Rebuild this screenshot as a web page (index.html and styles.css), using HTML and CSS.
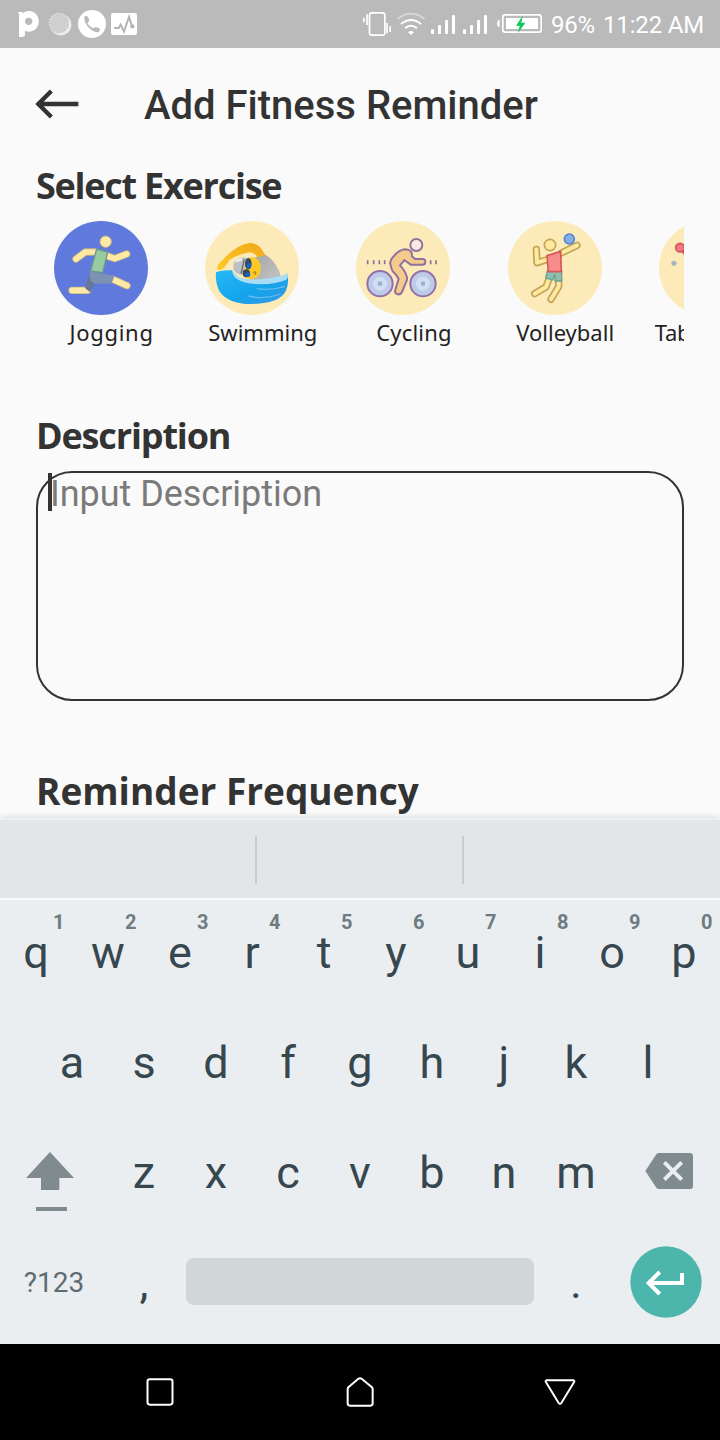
FILE: index.html
```html
<!DOCTYPE html>
<html lang="en">
<head>
<meta charset="utf-8">
<title>Add Fitness Reminder</title>
<link rel="stylesheet" href="styles.css">
</head>
<body>
<div class="phone">
  <div class="status">
    <svg width="42" height="48" viewBox="0 0 126 144"><path d="M54 36h12l3 3q8-6 18-6a29 31 0 1 1-12 59v11q0 8-9 8H57V43z" fill="#fff"/><circle cx="86" cy="64" r="11" fill="#bababa"/></svg>
    <svg width="34" height="48" viewBox="126 0 102 144"><circle cx="182" cy="74" r="32" fill="#eee"/><circle cx="177" cy="69" r="31" fill="#c9c9c9"/><circle cx="177" cy="69" r="27" fill="none" stroke="#e2e2e2" stroke-width="8" stroke-dasharray="3 5.5"/><circle cx="177" cy="69" r="22" fill="#d0d0d0"/></svg>
    <svg width="33" height="48" viewBox="228 0 99 144"><circle cx="276" cy="72" r="42" fill="#fff"/><path d="M254 49q5-3 10 1l4 12-6 8q7 11 17 15l8-4 12 4q3 7-2 11-15 4-32-14-15-17-11-33z" fill="#bababa"/></svg>
    <svg width="31" height="48" viewBox="327 0 93 144"><rect x="333" y="39" width="78" height="66" rx="7" fill="#fff"/><path d="M342 84h14l6-10 10 21 15-44 9 28" fill="none" stroke="#b4b4b4" stroke-width="6"/><circle cx="397" cy="79" r="6.500" fill="#b4b4b4"/></svg>
    <span class="spacer"></span>
    <svg width="34" height="48" viewBox="33 0 102 144" fill="none" stroke="#fff" stroke-width="5"><rect x="58.500" y="38.500" width="46" height="67" rx="7"/><path d="M41.500 53v14M51 43v32M111 69v31M120.500 78v18"/></svg>
    <svg width="32" height="48" viewBox="135 0 96 144" fill="none" stroke="#fff" stroke-width="6"><path d="M142 57Q183 26 224 57" stroke="#d6d6d6"/><path d="M153 72Q183 48 213 72M165 85Q183 70 201 85"/><path d="M174 97Q183 88 192 97L183 105z" fill="#fff" stroke="none"/></svg>
    <svg width="32" height="48" viewBox="231 0 96 144" fill="#fff"><rect x="243" y="88" width="9" height="14" rx="2"/><rect x="264" y="75" width="9" height="27" rx="2"/><rect x="285" y="60" width="9" height="42" rx="2"/><rect x="306" y="45" width="9" height="57" rx="2"/></svg>
    <svg width="32" height="48" viewBox="231 0 96 144" fill="#fff"><rect x="243" y="88" width="9" height="14" rx="2"/><rect x="264" y="75" width="9" height="27" rx="2"/><rect x="285" y="60" width="9" height="42" rx="2"/><rect x="306" y="45" width="9" height="57" rx="2"/></svg>
    <svg width="57" height="48" viewBox="423 0 171 144"><path d="M449 59v23q-8-2-8-11.500T449 59z" fill="#fff"/><rect x="458.500" y="44.500" width="115" height="52" rx="7" fill="none" stroke="#fff" stroke-width="5"/><rect x="468" y="54" width="96" height="33" fill="#fff"/><path d="M518 47L498 77h11l-5 22 22-31h-12z" fill="#0cc95c"/></svg>
    <span class="battery">96%</span><span class="clock">11:22 AM</span>
  </div>

  <main class="content">
    <header class="topbar">
      <svg class="back" width="44" height="30" viewBox="105 268 132 90" fill="none" stroke="#333" stroke-width="13"><path d="M235 313H116M154 274L115 313l39 39"/></svg>
      <h1>Add Fitness Reminder</h1>
    </header>

    <h2 class="h-exercise">Select Exercise</h2>
    <ul class="exercises">
      <li>
        <svg class="disc active" viewBox="41 33 282 282">
          <g fill="none" stroke-linecap="round" stroke-linejoin="round">
            <path d="M166 126h-31l-28 21M201 138l22 8 36-14M218 208l42 19M95 241h47" stroke="#c5b583" stroke-width="22"/>
            <path d="M166 126h-31l-28 21M201 138l22 8 36-14M218 208l42 19M95 241h47" stroke="#ffe9a4" stroke-width="17"/>
          </g>
          <path d="M147 188l-13 46 15 13 17-31 12-14z" fill="#66779a"/>
          <path d="M150 183l72 15-8 23h-49q-18-5-18-25z" fill="#7b92b4"/>
          <path d="M169 117l33 9-15 62-36-5z" fill="#99cba0" stroke="#67988e" stroke-width="4"/>
          <circle cx="196" cy="95" r="17" fill="#ffe9a4" stroke="#c5b583" stroke-width="3"/>
        </svg>
        <span class="jogging">Jogging</span>
      </li>
      <li>
        <svg class="disc" viewBox="45 33 282 282">
          <defs>
            <linearGradient id="water" x1="0" y1="0" x2="1" y2="1"><stop offset="0" stop-color="#29b9f5"/><stop offset=".55" stop-color="#13a4eb"/><stop offset="1" stop-color="#3497e2"/></linearGradient>
            <linearGradient id="arm" x1="0" y1="1" x2="1" y2="0"><stop offset="0" stop-color="#ffc927"/><stop offset="1" stop-color="#f0a818"/></linearGradient>
            <linearGradient id="suit" x1="0" y1="0" x2="1" y2="1"><stop offset="0" stop-color="#a3a3a3"/><stop offset="1" stop-color="#c6c6c6"/></linearGradient>
          </defs>
          <path d="M193 143l29-12q43 26 52 74l-40 14-59-9q31-25 18-67z" fill="url(#suit)"/>
          <path d="M83 178q-5-12 13-26 43-48 83-53 31-1 46 37l-22 6q-12-19-32-14-28 6-53 22-14 28-30 31z" fill="url(#arm)"/>
          <path d="M78 187q18-8 49-6 4 31 50 35 60 4 116-20 4 28-6 48-20 38-106 38-64 0-92-37-14-26-11-58z" fill="url(#water)"/>
          <path d="M127 181q12 24 51 27 50 2 91-9 15-2 24-11 4 14-5 22-36 15-92 12-69-4-69-41z" fill="#a9dcf5"/>
          <path d="M200 236q46 6 85-7M176 258q48 12 96-6" fill="none" stroke="#62bdf1" stroke-width="4"/>
          <path d="M172 144q33-9 40 24 3 37-30 39-18 0-27-16z" fill="#ffc925"/>
          <path d="M130 175q-4-27 25-32 13-1 20 3l-19 49q-22-2-26-20z" fill="#bcc1c5"/>
          <path d="M138 155q8-7 18-7" stroke="#ececec" stroke-width="8" fill="none"/>
          <path d="M163 148l-10 43" stroke="#6a6c6c" stroke-width="4"/>
          <ellipse cx="175" cy="161" rx="10" ry="17" fill="#34495b"/><ellipse cx="169" cy="190" rx="11" ry="12" fill="#34495b"/>
          <ellipse cx="177" cy="167" rx="7" ry="8" fill="#1763c5"/><ellipse cx="173" cy="194" rx="8" ry="7" fill="#1763c5"/>
          <path d="M190 188q8-6 8 2l-5 4" fill="none" stroke="#8c6519" stroke-width="3"/>
        </svg>
        <span class="swimming">Swimming</span>
      </li>
      <li>
        <svg class="disc" viewBox="48 33 282 282">
          <path d="M83 151v12M101 151v12M118 151v12M134 151v12M255 151v12M272 151v12M288 151v12" stroke="#8e6a9d" stroke-width="5"/>
          <g stroke="#9270a8" stroke-width="6"><circle cx="120" cy="221" r="38" fill="#bdcbe9"/><circle cx="249" cy="221" r="38" fill="#bdcbe9"/></g>
          <g fill="#d1def4"><circle cx="120" cy="221" r="21"/><circle cx="249" cy="221" r="21"/></g>
          <g fill="#9fafcf"><circle cx="120" cy="221" r="7"/><circle cx="249" cy="221" r="7"/></g>
          <path d="M152 166q-5-13 7-25 19-23 37-23 14 1 19 10l1 11 9 8h25q7 2 6 9-1 8-8 8h-36l-19-14-13 16q15 16 19 30 5 10-1 21l-12 29q-5 10-15 6-8-3-5-13l10-32-10-15q-11-8-14-26z" fill="#f5cb8c" stroke="#9270a0" stroke-width="6"/>
          <circle cx="229" cy="105" r="18" fill="#f9eadf" stroke="#9270a0" stroke-width="6"/>
        </svg>
        <span class="cycling">Cycling</span>
      </li>
      <li>
        <svg class="disc" viewBox="54 33 282 282">
          <g fill="none" stroke-linecap="round" stroke-linejoin="round">
            <path d="M171 149l-30 9-2-40M214 129l47-23M176 209l-8 22-34 20M206 210v20l-23 38" stroke="#c2a457" stroke-width="22"/>
            <path d="M171 149l-30 9-2-40M214 129l47-23M176 209l-8 22-34 20M206 210v20l-23 38" stroke="#ffe99e" stroke-width="12"/>
          </g>
          <path d="M172 182h43v31h-20v-20l-7 17-21-6z" fill="#91bdac" stroke="#67a298" stroke-width="4"/>
          <path d="M171 137l41-13 2 61h-39z" fill="#f78c8c" stroke="#d65759" stroke-width="5"/>
          <circle cx="180" cy="105" r="17" fill="#ffe99e" stroke="#c2a457" stroke-width="5"/>
          <circle cx="238" cy="87" r="15" fill="#84adeb" stroke="#5084cf" stroke-width="5"/>
        </svg>
        <span class="volleyball">Volleyball</span>
      </li>
      <li>
        <svg class="disc" viewBox="507 33 282 282">
          <circle cx="570" cy="113" r="13" fill="#f47780" stroke="#cf565b" stroke-width="5"/><path d="M576 121l45 47" stroke="#cf565b" stroke-width="10"/>
          <circle cx="552" cy="160" r="7" fill="#9fb4c4" stroke="#b5bfba" stroke-width="3"/>
        </svg>
        <span class="tennis">Table Tennis</span>
      </li>
    </ul>

    <h2 class="h-description">Description</h2>
    <div class="field"><span class="caret"></span><span class="placeholder">Input Description</span></div>
    <h2 class="h-frequency">Reminder Frequency</h2>
  </main>

  <section class="keyboard">
    <div class="suggestions"><i></i><i></i><i></i></div>
    <div class="row first">
      <b>q<sup>1</sup></b><b>w<sup>2</sup></b><b>e<sup>3</sup></b><b>r<sup>4</sup></b><b>t<sup>5</sup></b><b>y<sup>6</sup></b><b>u<sup>7</sup></b><b>i<sup>8</sup></b><b>o<sup>9</sup></b><b>p<sup>0</sup></b>
    </div>
    <div class="row second"><b>a</b><b>s</b><b>d</b><b>f</b><b>g</b><b>h</b><b>j</b><b>k</b><b>l</b></div>
    <div class="row">
      <svg width="108" height="110" viewBox="0 -36 324 330" fill="#808b8f"><path d="M150 66l72 78h-44v36h-55v-36H78zM108 231h93v12h-93z"/></svg>
      <b>z</b><b>x</b><b>c</b><b>v</b><b>b</b><b>n</b><b>m</b>
      <svg width="108" height="110" viewBox="396 -36 324 330"><path d="M537 69h92q10 0 10 10v88q0 10-10 10h-92q-5 0-8-4l-33-50 33-50q3-4 8-4z" fill="#808b8f"/><path d="M553 97l52 52m0-52l-52 52" stroke="#ebeef1" stroke-width="12"/></svg>
    </div>
    <div class="row">
      <span class="symbols">?123</span><b>,</b><span class="space"></span><b>.</b>
      <svg class="enter" width="72" height="72" viewBox="450 348 216 216"><circle cx="558" cy="456" r="107" fill="#4db6ac"/><path d="M606 429v30H505M539 426l-33 33 33 33" fill="none" stroke="#fff" stroke-width="12"/></svg>
    </div>
  </section>

  <nav class="navbar">
    <svg width="200" height="96" viewBox="-180 12 600 288"><rect x="82.500" y="118" width="75" height="76" rx="7"/></svg>
    <svg width="200" height="96" viewBox="420 12 600 288"><path d="M714 117q6-4 12 0l28 23q4 3 4 8v42q0 7-7 7h-61q-7 0-7-7v-42q0-5 4-8z"/></svg>
    <svg width="200" height="96" viewBox="1020 12 600 288"><path d="M1280 121h80q5 1 2 6l-38 62q-4 5-8 0l-38-62q-3-5 2-6z"/></svg>
  </nav>
</div>
</body>
</html>
```
FILE: styles.css
```css
* { box-sizing: border-box; }
body { margin: 0; background: #fafafa; font-family: Roboto, sans-serif; }
.phone { width: 720px; height: 1440px; display: flex; flex-direction: column; overflow: hidden; }
svg { display: block; flex: none; }
h1, h2, ul { margin: 0; padding: 0; }

.status { height: 48px; flex: none; display: flex; background: #bababa; color: #fff; font-size: 24px; line-height: 50px; white-space: nowrap; }
.spacer { flex: 1; }
.battery { width: 55px; padding-left: 3px; letter-spacing: -.3px; }
.clock { width: 117px; letter-spacing: -.15px; }

.content { height: 770px; flex: none; padding: 0 36px; overflow: hidden; color: #333; }
.topbar { height: 111px; display: flex; align-items: center; padding-top: 1px; }
.back { margin-left: -1px; }
h1 { margin-left: 65px; padding-top: 4px; font-size: 40px; font-weight: 500; line-height: 50px; white-space: nowrap; }
h2 { height: 50px; font: bold 36px/52px "Open Sans", sans-serif; white-space: nowrap; }
.h-exercise { letter-spacing: -1.25px; line-height: 53px; }
.exercises { display: flex; list-style: none; margin-top: 12px; height: 136px; overflow: hidden; }
.exercises li { flex: 0 0 151.2px; }
.exercises span { display: block; margin-top: 2px; text-align: center; font: 22px/30px "Noto Sans", sans-serif; color: #222; white-space: nowrap; }
.exercises .jogging { letter-spacing: .7px; }
.exercises .swimming { letter-spacing: 0; }
.exercises .cycling { letter-spacing: .2px; }
.exercises .volleyball { letter-spacing: 0; }
.exercises .tennis { letter-spacing: -.3px; }
.disc { width: 94px; height: 94px; margin-left: 18px; border-radius: 50%; background: #fcebb8; }
.disc.active { background: #6079dc; }
.h-description { margin-top: 52px; letter-spacing: -1.15px; line-height: 53px; }
.field { display: flex; height: 230px; margin-top: 12px; padding-left: 10px; border: 2px solid #333; border-radius: 36px; }
.caret { width: 4px; height: 38px; background: #333; }
.placeholder { margin-left: -2px; font-size: 36px; line-height: 42px; letter-spacing: -.04px; color: #7a7a7a; }
.h-frequency { margin-top: 64px; font-size: 37px; line-height: 51px; }

.keyboard { height: 526px; flex: none; border-top: 2px solid #eef1f3; background: #ebeef1; box-shadow: 0 -1px 6px rgba(0, 0, 0, .13); color: #37474f; position: relative; }
.suggestions { height: 80px; padding: 16px 0 14px; display: flex; background: #e2e6e9; border-bottom: 2px solid #f7f9fb; }
.suggestions i { width: 207px; border-right: 2px solid #c9cdd0; }
.suggestions i:first-child { width: 257px; }
.suggestions i:last-child { flex: 1; border: 0; }
.row { display: flex; height: 110px; line-height: 110px; font-size: 45px; }
.row b { position: relative; width: 72px; flex: none; text-align: center; font-weight: 400; }
.first { height: 108px; line-height: 106px; }
.first sup { position: absolute; left: 53px; top: 10px; font-size: 20px; font-weight: 700; line-height: 24px; color: #6f7b80; }
.second { padding-left: 36px; }
.symbols { width: 108px; line-height: 109px; text-align: center; font-size: 28px; color: #5d6c72; }
.space { width: 348px; height: 47px; margin: 30px 6px 0; border-radius: 8px; background: #d0d5d8; }
.enter { margin: 18px 0 0 18px; }

.navbar { flex: 1; display: flex; justify-content: center; background: #000; }
.navbar svg { fill: none; stroke: #fff; stroke-width: 6; }
```
